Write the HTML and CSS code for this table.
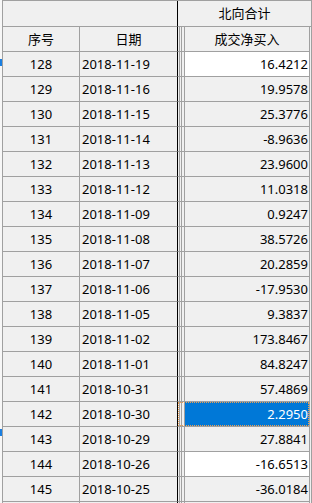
FILE: index.html
```html
<!DOCTYPE html>
<html lang="zh">
<head>
<meta charset="utf-8">
<title>北向合计</title>
<link rel="stylesheet" href="styles.css">
</head>
<body>
<div class="edge">
  <span class="mark mark-a"></span>
  <span class="mark mark-b"></span>
</div>
<div class="sheet">
  <div class="row row-top">
    <div class="cell blank"></div>
    <div class="cell group">北向合计</div>
  </div>
  <div class="row">
    <div class="cell c1">序号</div>
    <div class="cell c2 center">日期</div>
    <div class="sep"></div>
    <div class="cell c3 center">成交净买入</div>
    <div class="tail"></div>
  </div>
  <div class="row"><div class="cell c1">128</div><div class="cell c2">2018-11-19</div><div class="sep"></div><div class="cell c3 white">16.4212</div><div class="tail"></div></div>
  <div class="row"><div class="cell c1">129</div><div class="cell c2">2018-11-16</div><div class="sep"></div><div class="cell c3">19.9578</div><div class="tail"></div></div>
  <div class="row"><div class="cell c1">130</div><div class="cell c2">2018-11-15</div><div class="sep"></div><div class="cell c3">25.3776</div><div class="tail"></div></div>
  <div class="row"><div class="cell c1">131</div><div class="cell c2">2018-11-14</div><div class="sep"></div><div class="cell c3">-8.9636</div><div class="tail"></div></div>
  <div class="row"><div class="cell c1">132</div><div class="cell c2">2018-11-13</div><div class="sep"></div><div class="cell c3">23.9600</div><div class="tail"></div></div>
  <div class="row"><div class="cell c1">133</div><div class="cell c2">2018-11-12</div><div class="sep"></div><div class="cell c3">11.0318</div><div class="tail"></div></div>
  <div class="row"><div class="cell c1">134</div><div class="cell c2">2018-11-09</div><div class="sep"></div><div class="cell c3">0.9247</div><div class="tail"></div></div>
  <div class="row"><div class="cell c1">135</div><div class="cell c2">2018-11-08</div><div class="sep"></div><div class="cell c3">38.5726</div><div class="tail"></div></div>
  <div class="row"><div class="cell c1">136</div><div class="cell c2">2018-11-07</div><div class="sep"></div><div class="cell c3">20.2859</div><div class="tail"></div></div>
  <div class="row"><div class="cell c1">137</div><div class="cell c2">2018-11-06</div><div class="sep"></div><div class="cell c3">-17.9530</div><div class="tail"></div></div>
  <div class="row"><div class="cell c1">138</div><div class="cell c2">2018-11-05</div><div class="sep"></div><div class="cell c3">9.3837</div><div class="tail"></div></div>
  <div class="row"><div class="cell c1">139</div><div class="cell c2">2018-11-02</div><div class="sep"></div><div class="cell c3">173.8467</div><div class="tail"></div></div>
  <div class="row"><div class="cell c1">140</div><div class="cell c2">2018-11-01</div><div class="sep"></div><div class="cell c3">84.8247</div><div class="tail"></div></div>
  <div class="row"><div class="cell c1">141</div><div class="cell c2">2018-10-31</div><div class="sep"></div><div class="cell c3">57.4869</div><div class="tail"></div></div>
  <div class="row selected-row"><div class="cell c1">142</div><div class="cell c2">2018-10-30</div><div class="sep"></div><div class="cell c3 selected">2.2950</div><div class="tail"></div><span class="focus"></span></div>
  <div class="row"><div class="cell c1">143</div><div class="cell c2">2018-10-29</div><div class="sep"></div><div class="cell c3">27.8841</div><div class="tail"></div></div>
  <div class="row"><div class="cell c1">144</div><div class="cell c2">2018-10-26</div><div class="sep"></div><div class="cell c3 white">-16.6513</div><div class="tail"></div></div>
  <div class="row"><div class="cell c1">145</div><div class="cell c2">2018-10-25</div><div class="sep"></div><div class="cell c3">-36.0184</div><div class="tail"></div></div>
  <div class="row"><div class="cell c1"></div><div class="cell c2"></div><div class="sep"></div><div class="cell c3"></div><div class="tail"></div></div>
</div>
</body>
</html>
```
FILE: styles.css
```css
html, body {
  margin: 0;
  padding: 0;
  background: #f0f0f0;
  overflow: hidden;
}

body {
  display: flex;
  height: 503px;
  font-family: "Noto Sans", "Noto Sans CJK SC", sans-serif;
  font-size: 13px;
  color: #000;
}

.edge {
  position: relative;
  width: 2px;
  flex: none;
  background: #f7f7f7;
}

.mark {
  position: absolute;
  left: 0;
  width: 2px;
  background: #1a7ee0;
}

.mark-a { top: 59px; height: 7px; }
.mark-b { top: 429px; height: 7px; }

.sheet {
  flex: none;
  width: 310px;
  border-left: 1px solid #a0a0a0;
  border-top: 1px solid #a0a0a0;
  box-sizing: border-box;
}

.row {
  position: relative;
  display: flex;
  height: 25px;
}

.row-top {
  height: 26px;
}

.cell {
  box-sizing: border-box;
  height: 100%;
  border-bottom: 1px solid #a0a0a0;
  border-right: 1px solid #a0a0a0;
  padding-top: 1px;
  line-height: 23px;
  white-space: nowrap;
  overflow: hidden;
  background: #f0f0f0;
}

.blank {
  width: 175px;
  border-right-color: #000;
}

.group {
  width: 134px;
  text-align: center;
  padding-top: 0;
  line-height: 25px;
}

.c1 {
  width: 77px;
  text-align: center;
}

.c2 {
  width: 98px;
  border-right-color: #000;
  padding-left: 2px;
}

.c2.center {
  text-align: center;
  padding-left: 0;
}

.sep {
  box-sizing: border-box;
  width: 7px;
  height: 100%;
  border-bottom: 1px solid #a0a0a0;
  background: linear-gradient(to right,
    #f0f0f0 0 1px, #a0a0a0 1px 2px, #f0f0f0 2px 3px,
    #a0a0a0 3px 4px, #f0f0f0 4px 6px, #a0a0a0 6px 7px);
}

.c3 {
  width: 125px;
  text-align: right;
  padding-right: 1px;
}

.c3.center {
  text-align: center;
  padding-right: 0;
}

.c3.white {
  background: #fff;
}

.c3.selected {
  background: #0078d7;
  color: #fff;
}

.tail {
  box-sizing: border-box;
  width: 2px;
  height: 100%;
  border-right: 1px solid #a0a0a0;
}

.focus {
  position: absolute;
  left: 175px;
  top: 0;
  width: 131px;
  height: 24px;
  box-sizing: border-box;
  border: 1px dotted #f0a050;
  pointer-events: none;
}
```
